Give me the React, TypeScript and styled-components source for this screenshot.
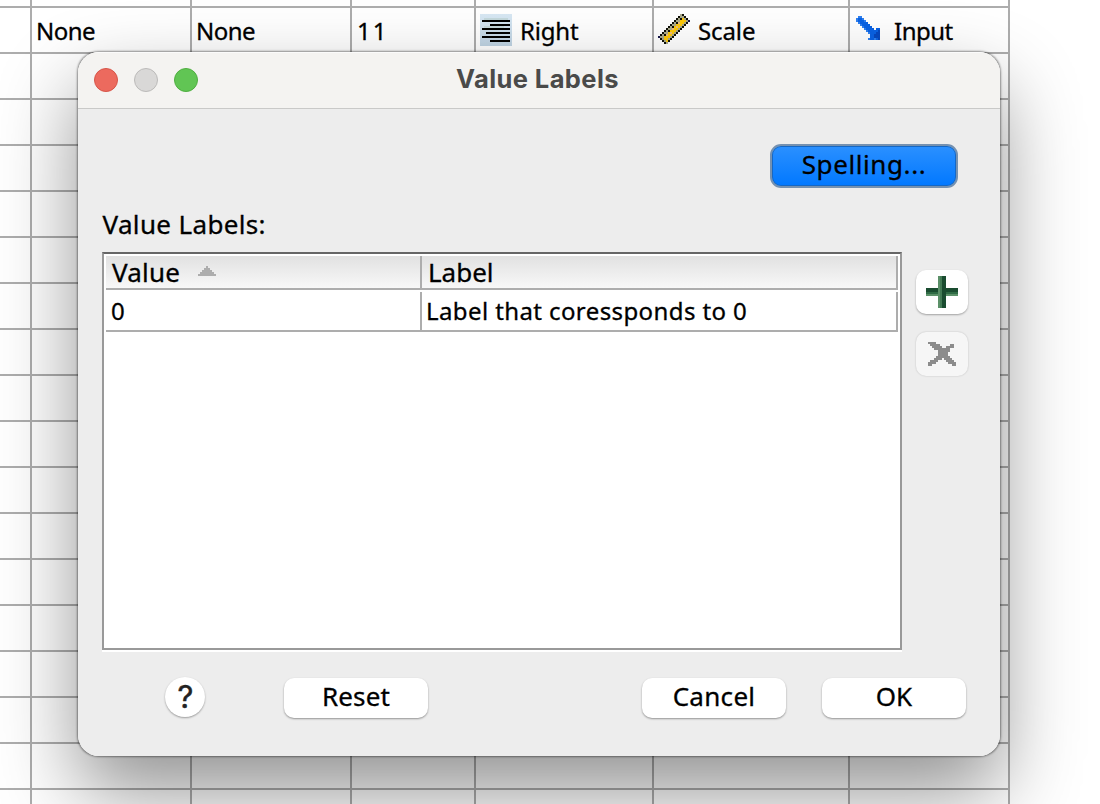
import React from "react";
import styled, { createGlobalStyle } from "styled-components";

const Global = createGlobalStyle`
  * { box-sizing: border-box; }
  body { margin: 0; background: #fff; overflow: hidden; }
`;

const ui = `"Noto Sans", "Open Sans", sans-serif`;

const Screen = styled.div`
  position: relative;
  width: 1100px;
  height: 804px;
  overflow: hidden;
  background: #fff;
  color: #000;
  font-family: ${ui};
`;

const Sheet = styled.div`
  display: flex;
  flex-direction: column;
  width: 1010px;
`;

const SheetRow = styled.div<{ $first?: boolean }>`
  display: grid;
  grid-template-columns: 32px 160px 160px 124px 178px 196px 160px;
  height: ${(p) => (p.$first ? 8 : 46)}px;
  flex: none;
`;

const SheetCell = styled.div`
  display: flex;
  align-items: center;
  border-right: 2px solid #adadad;
  border-bottom: 2px solid #adadad;
  padding-left: 4px;
`;

const IconSlot = styled.span<{ $lift: number }>`
  display: flex;
  padding-bottom: ${(p) => p.$lift * 2}px;
`;

const Label = styled.span<{ $size?: number; $gap?: number; $track?: number; $drop?: number }>`
  display: block;
  font-size: ${(p) => p.$size ?? 24}px;
  line-height: 30px;
  letter-spacing: ${(p) => p.$track ?? 0}px;
  padding-left: ${(p) => p.$gap ?? 0}px;
  padding-top: ${(p) => p.$drop ?? 0}px;
  white-space: pre;
  -webkit-text-stroke: 0.3px #000;
`;

const Dialog = styled.section`
  position: absolute;
  left: 78px;
  top: 52px;
  width: 922px;
  height: 704px;
  border-radius: 21px;
  background: #ededed;
  overflow: hidden;
  display: flex;
  flex-direction: column;
`;

const DialogShadow = styled.div`
  position: absolute;
  left: 78px;
  top: 52px;
  width: 922px;
  height: 704px;
  border-radius: 21px;
  box-shadow: 0 0 2px 0.5px rgba(0, 0, 0, 0.4), 0 36px 80px rgba(0, 0, 0, 0.43);
`;

const TitleBar = styled.header`
  display: grid;
  grid-template-columns: 150px 1fr 150px;
  align-items: center;
  height: 57px;
  flex: none;
  background: #f4f3f1;
  border-bottom: 1px solid #c9c9c8;
  border-top: 1px solid #fbfbfb;
  padding-bottom: 2px;
`;

const Lights = styled.div`
  display: flex;
  gap: 16px;
  padding-left: 16px;
`;

const Light = styled.span<{ $fill: string; $edge: string }>`
  width: 24px;
  height: 24px;
  border-radius: 50%;
  background: ${(p) => p.$fill};
  border: 1px solid ${(p) => p.$edge};
`;

const Title = styled.h1`
  margin: 0;
  text-align: center;
  font: 700 25.5px/30px Inter, sans-serif;
  letter-spacing: 0.4px;
  color: #4a4a49;
  padding-bottom: 2px;
  padding-right: 3px;
`;

const Body = styled.div`
  display: flex;
  flex-direction: column;
  padding: 35px 0 0 24px;
`;

const TopBar = styled.div`
  display: flex;
  justify-content: flex-end;
  padding-right: 42px;
`;

const PrimaryButton = styled.button`
  width: 188px;
  height: 44px;
  padding: 0 0 5px;
  display: flex;
  align-items: center;
  justify-content: center;
  font-family: ${ui};
  border: 2px solid #7591b0;
  border-radius: 11px;
  background: linear-gradient(#2b90ff, #0178ff);
  box-shadow: inset 0 0 0 1px #1567c4;
  color: #000;
`;

const ListLabel = styled.div`
  height: 64px;
  padding-top: 21px;
`;

const Columns = styled.div`
  display: flex;
  gap: 14px;
  height: 400px;
`;

const Table = styled.div`
  width: 800px;
  height: 398px;
  background: #fff;
  border: 2px solid #999;
  border-top-color: #666;
  box-shadow: 0 2px 0 #fff;
  padding: 2px;
`;

const TableRow = styled.div<{ $head?: boolean }>`
  display: grid;
  grid-template-columns: 316px 476px;
  height: ${(p) => (p.$head ? 34 : 40)}px;
  margin-bottom: 2px;
  border-bottom: 2px solid #adadad;
  background: ${(p) => (p.$head ? "linear-gradient(#e1e1e1, #f8f8f8)" : "#fff")};
`;

const TableCell = styled.div`
  display: flex;
  align-items: center;
  border-right: 2px solid #adadad;
`;

const SortMark = styled.span`
  display: flex;
  padding: 0 0 2px 18px;
`;

const Tools = styled.div`
  display: flex;
  flex-direction: column;
  gap: 18px;
  padding-top: 18px;
`;

const ToolButton = styled.button<{ $off?: boolean }>`
  width: 52px;
  height: 44px;
  padding: 0;
  display: flex;
  align-items: center;
  justify-content: center;
  border: 0;
  border-radius: 10px;
  background: ${(p) => (p.$off ? "#f6f6f6" : "#fff")};
  box-shadow: 0 ${(p) => (p.$off ? 0 : 1)}px 2px rgba(0, 0, 0, ${(p) => (p.$off ? 0.2 : 0.32)});
`;

const Footer = styled.footer`
  display: flex;
  align-items: center;
  padding: 25px 0 0 63px;
`;

const HelpButton = styled.button`
  width: 40px;
  height: 40px;
  margin: 0 79px 2px 0;
  padding: 0 0 0 1px;
  border: 0;
  border-radius: 50%;
  background: #fff;
  box-shadow: 0 1px 2px rgba(0, 0, 0, 0.35);
  font: 400 31px/40px Inter, sans-serif;
  -webkit-text-stroke: 0.5px #222;
  color: #222;
`;

const PushButton = styled.button<{ $after?: number }>`
  width: 144px;
  height: 40px;
  margin-right: ${(p) => p.$after ?? 0}px;
  padding: 0 0 5px;
  display: flex;
  align-items: center;
  justify-content: center;
  font-family: ${ui};
  color: #000;
  border: 0;
  border-radius: 10px;
  background: #fff;
  box-shadow: 0 1px 2px rgba(0, 0, 0, 0.38);
`;

type PixelProps = { rows: string[]; colors: Record<string, string> };

/* Draws a low-resolution icon where each character is one 2px square. */
function PixelIcon({ rows, colors }: PixelProps) {
  const w = Math.max(...rows.map((r) => r.length));
  return (
    <svg
      width={w * 2}
      height={rows.length * 2}
      viewBox={`0 0 ${w} ${rows.length}`}
      shapeRendering="crispEdges"
    >
      {rows.flatMap((row, y) =>
        [...row].map((c, x) =>
          colors[c] ? <rect key={`${x}-${y}`} x={x} y={y} width={1} height={1} fill={colors[c]} /> : null
        )
      )}
    </svg>
  );
}

const ruler = [
  "...........gk...",
  "..........kggk..",
  ".........kgkygk.",
  "........kggyyygb",
  ".......kgkoyygk.",
  "......kggyyygk..",
  ".....kgkyoygk...",
  "....kggoyygk....",
  "...kgkyyygk.....",
  "..kggyoygk......",
  ".kgkoyygk.......",
  "bggyyygk........",
  ".kgyygk.........",
  "..kgyk..........",
  "...kg...........",
];

const arrow = [
  ".aa.........",
  "abba........",
  "abbba.......",
  ".abbbb......",
  "..abbbb.....",
  "...abbbb....",
  "....abbbb.bb",
  ".....abbbbbc",
  "......abbbcc",
  ".......bbccc",
  ".......bbccc",
  "......abbabc",
];

const cross = [
  "xxxx..........",
  ".xxxxx.....xx.",
  "..xxxxx..xxxx.",
  "...xxxxxxxx...",
  ".....xxxxxx...",
  ".....xxxxx....",
  ".....xxxxx....",
  "....xxxxxxx...",
  "...xxxx.xxxx..",
  ".xxxx....xxxx.",
  "xxxx......xxxx",
  "xx..........xx",
];

const triangle = ["....x....", "...xxx...", "..xxxxx..", ".xxxxxxx.", "xxxxxxxxx"];

function AlignIcon() {
  return (
    <svg width="32" height="32" viewBox="0 0 32 32" shapeRendering="crispEdges">
      <defs>
        <linearGradient id="alignFill" x1="0" y1="0" x2="0" y2="1">
          <stop offset="0" stopColor="#d8e8f4" />
          <stop offset="1" stopColor="#bfd3e3" />
        </linearGradient>
      </defs>
      <rect width="32" height="32" fill="url(#alignFill)" />
      <path d="M4 4h24v4H4zM4 12h20v2H4zM4 18h16v2H6z" fill="#c4d8dc" />
      <path
        d="M2 6h28v2H2zM10 10h20v2H10zM2 14h28v2H2zM6 18h24v2H6zM2 22h28v2H2zM10 26h20v2H10z"
        fill="#000"
      />
    </svg>
  );
}

function PlusIcon() {
  return (
    <svg width="32" height="32" viewBox="0 0 32 32" shapeRendering="crispEdges">
      <path d="M0 12h32v4H0z" fill="#1a4c30" />
      <path d="M0 16h32v2H0z" fill="#2f6b45" />
      <path d="M0 18h32v2H0z" fill="#5b9068" />
      <path d="M12 0h2v32h-2z" fill="#5b9068" />
      <path d="M14 0h2v32h-2z" fill="#437b55" />
      <path d="M16 0h4v32h-4z" fill="#1a4c30" />
    </svg>
  );
}

const COLUMNS = 7;

function EmptyCells() {
  return (
    <>
      {Array.from({ length: COLUMNS }, (_, i) => (
        <SheetCell key={i} />
      ))}
    </>
  );
}

export default function App() {
  return (
    <Screen>
      <Global />
      <Sheet>
        <SheetRow $first>
          <EmptyCells />
        </SheetRow>
        <SheetRow>
          <SheetCell />
          <SheetCell><Label $track={-0.5} $drop={2}>None</Label></SheetCell>
          <SheetCell><Label $track={-0.5} $drop={2}>None</Label></SheetCell>
          <SheetCell><Label $gap={1} $track={2} $drop={2}>11</Label></SheetCell>
          <SheetCell><AlignIcon /><Label $gap={8} $track={-0.2} $drop={2}>Right</Label></SheetCell>
          <SheetCell>
            <IconSlot $lift={1}>
              <PixelIcon
                rows={ruler}
                colors={{ k: "#111108", g: "#a9a98a", y: "#fcc80a", o: "#f0c078", b: "#15154a" }}
              />
            </IconSlot>
            <Label $gap={8} $track={-0.1} $drop={2}>Scale</Label>
          </SheetCell>
          <SheetCell>
            <Label $gap={2} />
            <IconSlot $lift={2}>
              <PixelIcon rows={arrow} colors={{ a: "#2f80f0", b: "#0a62e4", c: "#0648c0" }} />
            </IconSlot>
            <Label $gap={14} $track={-0.5} $drop={2}>Input</Label>
          </SheetCell>
        </SheetRow>
        {Array.from({ length: 17 }, (_, i) => (
          <SheetRow key={i}>
            <EmptyCells />
          </SheetRow>
        ))}
      </Sheet>

      <DialogShadow />
      <Dialog>
        <TitleBar>
          <Lights>
            <Light $fill="#ec6a5e" $edge="#d65549" />
            <Light $fill="#d9d8d7" $edge="#bbbab9" />
            <Light $fill="#61c554" $edge="#4fae41" />
          </Lights>
          <Title>Value Labels</Title>
        </TitleBar>
        <Body>
          <TopBar>
            <PrimaryButton><Label $size={26} $track={0.6}>Spelling...</Label></PrimaryButton>
          </TopBar>
          <ListLabel><Label $size={26} $gap={0.5} $track={0.35}>Value Labels:</Label></ListLabel>
          <Columns>
            <Table>
              <TableRow $head>
                <TableCell>
                  <Label $size={26} $gap={6} $track={0.2}>Value</Label>
                  <SortMark><PixelIcon rows={triangle} colors={{ x: "#adadad" }} /></SortMark>
                </TableCell>
                <TableCell><Label $size={26} $gap={6}>Label</Label></TableCell>
              </TableRow>
              <TableRow>
                <TableCell><Label $gap={5}>0</Label></TableCell>
                <TableCell><Label $gap={4} $track={0.4}>Label that coressponds to 0</Label></TableCell>
              </TableRow>
            </Table>
            <Tools>
              <ToolButton><PlusIcon /></ToolButton>
              <ToolButton $off><PixelIcon rows={cross} colors={{ x: "#8c8c8c" }} /></ToolButton>
            </Tools>
          </Columns>
          <Footer>
            <HelpButton>?</HelpButton>
            <PushButton $after={214}><Label $size={26} $track={0.1}>Reset</Label></PushButton>
            <PushButton $after={36}><Label $size={26} $track={0.3}>Cancel</Label></PushButton>
            <PushButton><Label $size={26}>OK</Label></PushButton>
          </Footer>
        </Body>
      </Dialog>
    </Screen>
  );
}
